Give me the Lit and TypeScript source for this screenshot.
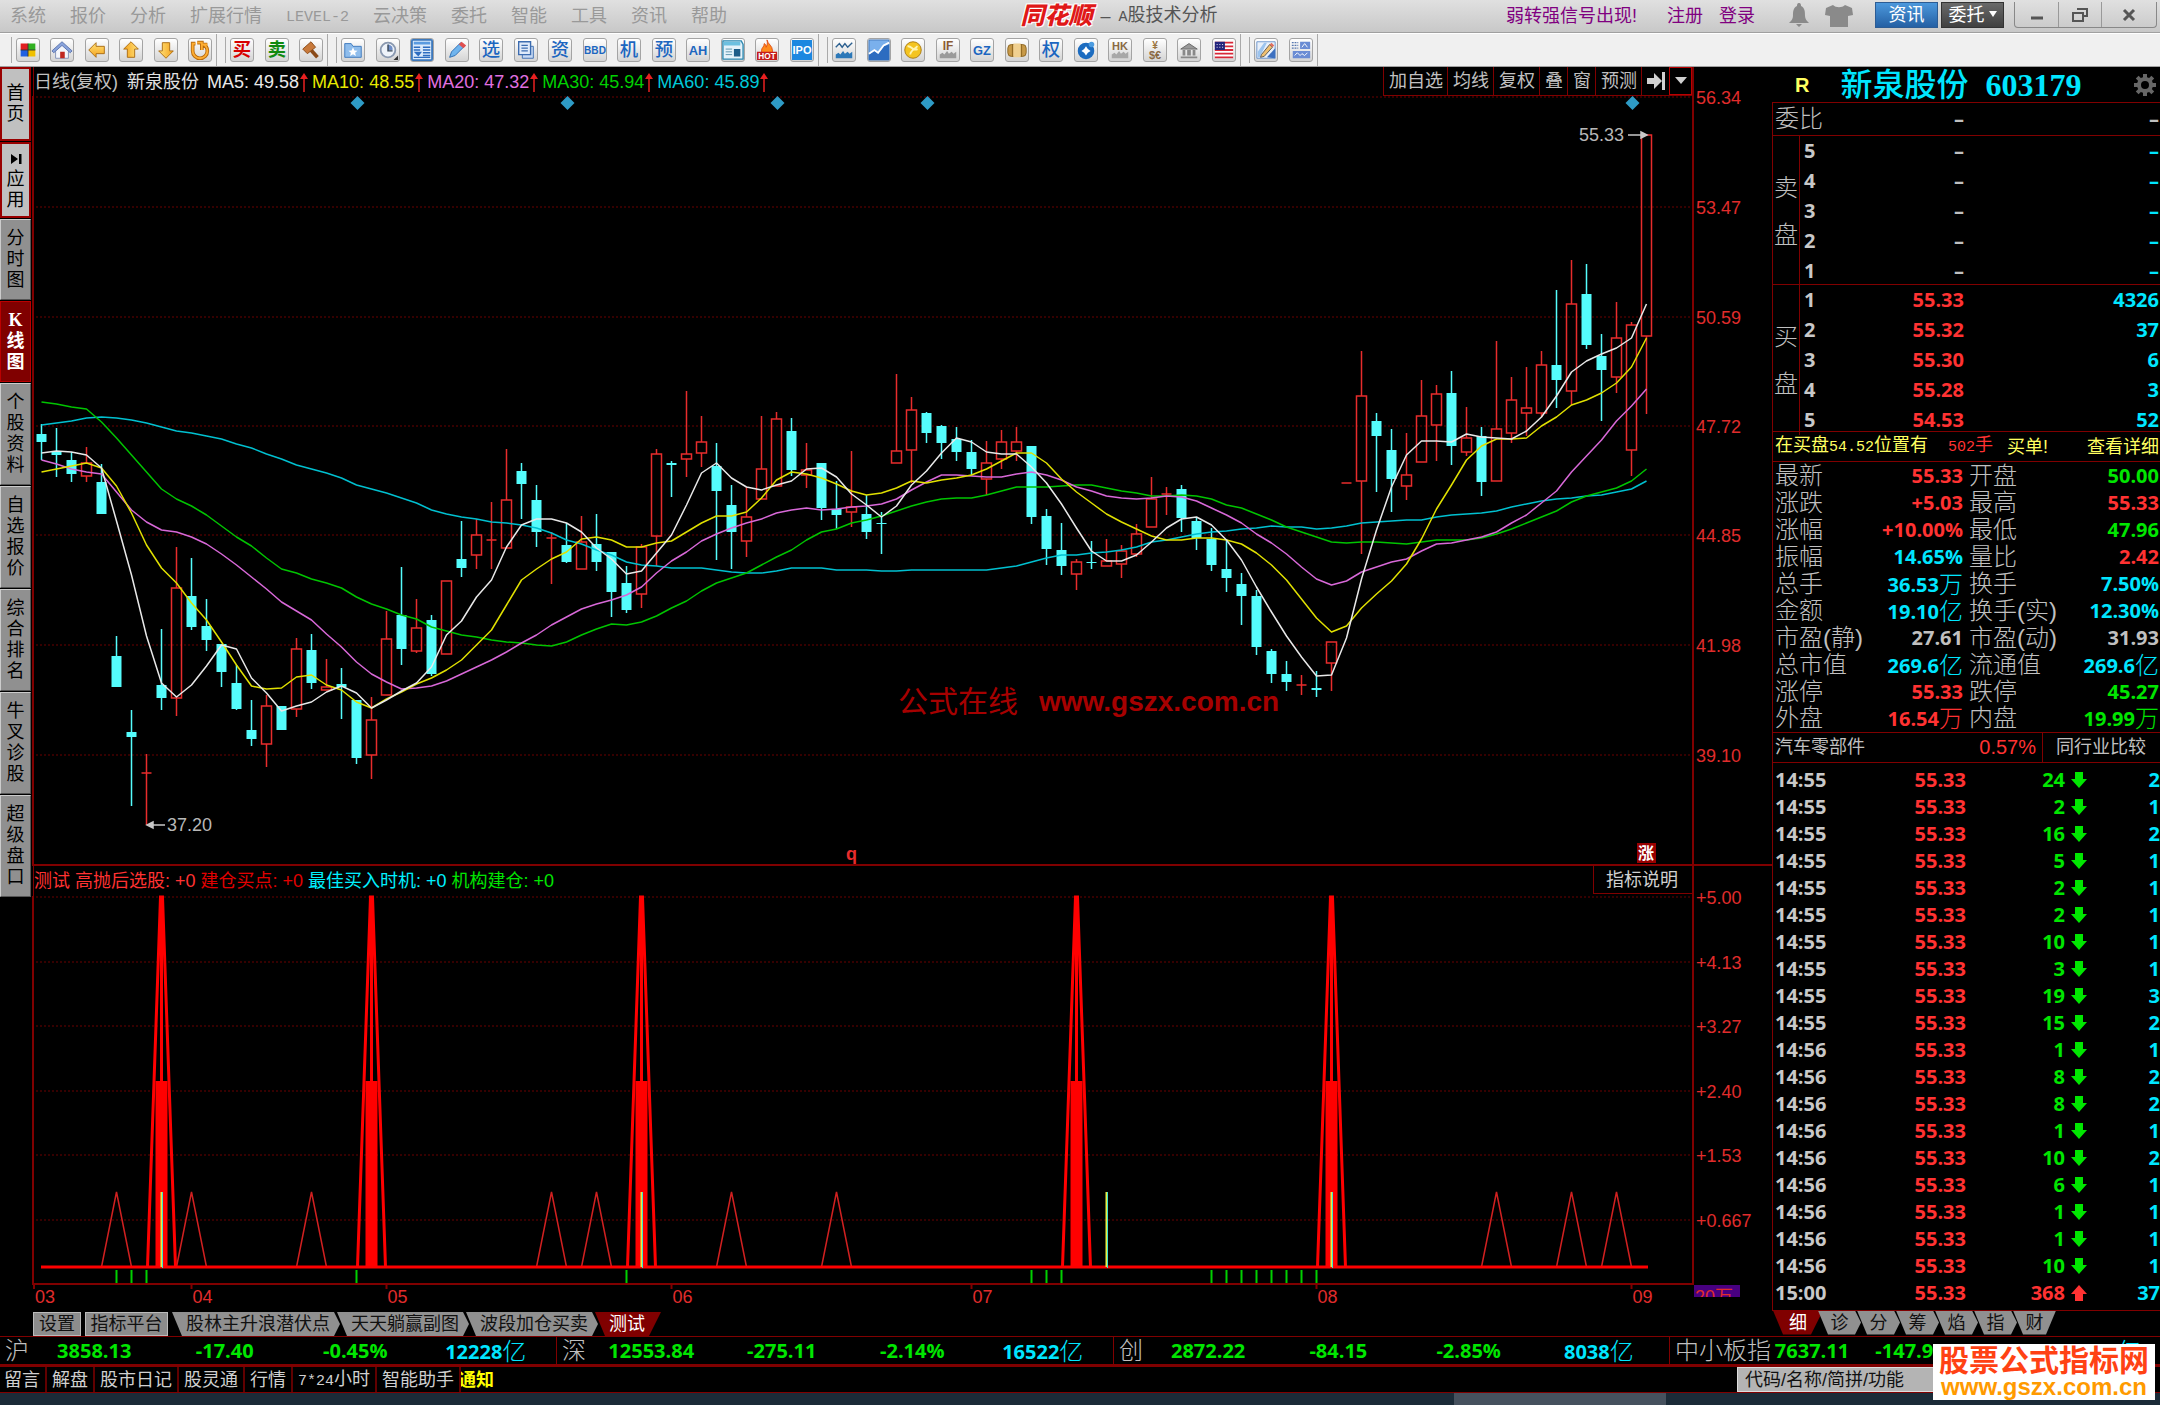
import { LitElement, html, css, svg, nothing } from "lit";
import { customElement } from "lit/decorators.js";
import { classMap } from "lit/directives/class-map.js";

/* ---------- chart data (chart units, one step per trading day) ---------- */

// direction, high, body top, body bottom, low
type Candle = [string, number, number, number, number];

const CANDLES: Candle[] = [
  ["d", 424, 434, 442, 460], ["d", 428, 452, 455, 477], ["d", 452, 460, 474, 482], ["u", 447, 463, 476, 482],
  ["d", 464, 482, 514, 514], ["d", 636, 656, 687, 687], ["d", 710, 732, 737, 806], ["u", 754, 773, 773, 825],
  ["d", 629, 685, 698, 710], ["u", 547, 588, 698, 716], ["d", 558, 596, 627, 630], ["d", 599, 626, 640, 651],
  ["d", 644, 644, 672, 687], ["d", 665, 683, 709, 710], ["d", 700, 730, 739, 746], ["u", 695, 706, 744, 767],
  ["d", 706, 706, 730, 730], ["u", 638, 649, 709, 717], ["d", 634, 650, 683, 689], ["u", 659, 687, 690, 690],
  ["d", 668, 684, 687, 719], ["d", 700, 700, 758, 764], ["u", 697, 720, 755, 779], ["u", 611, 639, 695, 695],
  ["d", 567, 615, 649, 665], ["u", 599, 628, 651, 653], ["d", 615, 620, 674, 676], ["u", 581, 581, 654, 654],
  ["d", 521, 559, 568, 577], ["u", 519, 535, 555, 569], ["u", 502, 540, 540, 569], ["u", 449, 500, 548, 548],
  ["d", 463, 471, 484, 519], ["d", 485, 500, 532, 547], ["u", 532, 538, 538, 584], ["d", 523, 545, 562, 563],
  ["u", 516, 542, 569, 569], ["d", 514, 544, 562, 571], ["d", 552, 552, 592, 617], ["d", 566, 583, 610, 613],
  ["u", 544, 547, 594, 608], ["u", 449, 454, 536, 566], ["d", 461, 463, 465, 497], ["u", 391, 454, 459, 477],
  ["u", 416, 442, 453, 467], ["d", 443, 466, 491, 560], ["d", 485, 505, 532, 569], ["u", 487, 517, 541, 557],
  ["u", 416, 469, 499, 499], ["u", 412, 419, 486, 486], ["d", 418, 431, 470, 476], ["u", 443, 470, 475, 488],
  ["d", 463, 463, 508, 520], ["d", 481, 509, 515, 529], ["u", 451, 507, 512, 527], ["d", 495, 514, 532, 539],
  ["d", 512, 523, 524, 554], ["u", 374, 451, 463, 463], ["u", 397, 410, 450, 483], ["d", 412, 413, 433, 443],
  ["d", 425, 426, 443, 459], ["d", 427, 439, 452, 461], ["d", 440, 452, 469, 475], ["u", 441, 463, 479, 495],
  ["u", 430, 442, 459, 469], ["u", 427, 442, 451, 461], ["d", 446, 446, 517, 524], ["d", 509, 516, 549, 565],
  ["d", 523, 550, 566, 575], ["u", 559, 562, 574, 590], ["d", 541, 562, 563, 569], ["u", 539, 561, 566, 566],
  ["u", 545, 551, 564, 578], ["u", 524, 534, 554, 557], ["u", 477, 499, 527, 527], ["u", 487, 494, 494, 515],
  ["d", 485, 489, 518, 532], ["d", 517, 521, 538, 550], ["d", 528, 539, 565, 571], ["d", 539, 569, 578, 592],
  ["d", 573, 584, 596, 625], ["d", 590, 596, 647, 655], ["d", 649, 651, 674, 683], ["d", 661, 674, 682, 691],
  ["u", 675, 685, 685, 695], ["d", 671, 688, 690, 697], ["u", 642, 642, 663, 691], ["u", 483, 483, 483, 483],
  ["u", 351, 396, 481, 554], ["d", 413, 421, 436, 492], ["d", 429, 450, 479, 512], ["u", 433, 475, 486, 500],
  ["u", 380, 416, 462, 462], ["u", 385, 394, 425, 461], ["d", 371, 393, 446, 465], ["u", 407, 438, 452, 456],
  ["d", 427, 436, 482, 496], ["u", 341, 429, 481, 481], ["u", 377, 400, 433, 443], ["u", 367, 408, 413, 436],
  ["u", 351, 365, 413, 417], ["d", 290, 365, 380, 408], ["u", 260, 304, 391, 405], ["d", 264, 294, 345, 349],
  ["d", 334, 356, 370, 421], ["u", 302, 338, 377, 393], ["u", 322, 325, 450, 476], ["u", 135, 135, 336, 414],
];

const AVERAGES: { tone: string; points: number[] }[] = [
  { tone: "c60", points: [425, 423, 421, 418, 417, 418, 420, 423, 427, 431, 433, 436, 439, 444, 448, 454, 459, 465, 469, 473, 478, 485, 489, 493, 498, 503, 510, 514, 517, 519, 522, 523, 525, 528, 533, 540, 544, 550, 555, 562, 565, 566, 568, 568, 568, 570, 572, 573, 573, 571, 568, 568, 568, 570, 570, 570, 571, 571, 570, 570, 570, 570, 570, 570, 568, 566, 562, 558, 555, 555, 553, 552, 550, 547, 542, 540, 537, 534, 532, 531, 529, 528, 526, 527, 527, 529, 528, 526, 523, 522, 521, 520, 520, 517, 515, 514, 513, 511, 507, 504, 501, 499, 498, 496, 495, 492, 489, 481] },
  { tone: "c30", points: [402, 404, 407, 409, 422, 438, 455, 472, 489, 499, 506, 515, 526, 537, 546, 558, 569, 573, 579, 583, 588, 597, 604, 609, 615, 619, 627, 631, 635, 637, 640, 642, 643, 645, 646, 642, 635, 629, 624, 625, 622, 616, 608, 601, 591, 583, 578, 573, 565, 557, 550, 540, 532, 529, 523, 520, 516, 511, 506, 502, 499, 498, 498, 495, 491, 487, 487, 487, 486, 485, 485, 488, 491, 493, 496, 496, 495, 496, 499, 505, 508, 514, 520, 527, 532, 537, 542, 543, 542, 542, 543, 544, 542, 540, 540, 540, 538, 534, 529, 523, 517, 511, 502, 496, 492, 488, 481, 469] },
  { tone: "c20", points: [460, 464, 469, 472, 474, 492, 510, 522, 530, 532, 537, 544, 554, 565, 577, 589, 602, 611, 620, 634, 647, 662, 674, 682, 689, 688, 686, 681, 674, 667, 660, 652, 643, 635, 625, 617, 609, 604, 600, 595, 587, 573, 561, 552, 541, 534, 528, 523, 519, 513, 510, 508, 510, 509, 507, 506, 504, 499, 490, 482, 475, 475, 476, 477, 477, 474, 472, 475, 480, 487, 491, 496, 498, 499, 498, 496, 497, 501, 508, 515, 523, 534, 543, 554, 567, 579, 585, 581, 572, 567, 562, 559, 551, 544, 543, 540, 537, 532, 523, 515, 503, 491, 472, 456, 440, 421, 406, 389] },
  { tone: "c10", points: [472, 469, 466, 463, 468, 486, 513, 545, 568, 583, 603, 620, 642, 665, 686, 689, 688, 677, 675, 685, 690, 702, 708, 699, 692, 684, 678, 670, 660, 645, 630, 605, 580, 569, 559, 552, 539, 537, 540, 547, 547, 543, 541, 532, 523, 516, 516, 512, 498, 480, 472, 474, 478, 484, 491, 495, 493, 488, 481, 483, 480, 478, 475, 469, 461, 453, 453, 463, 479, 492, 503, 514, 522, 529, 536, 540, 540, 538, 538, 540, 544, 553, 565, 580, 599, 618, 632, 626, 608, 594, 581, 564, 539, 509, 485, 460, 446, 439, 439, 438, 426, 417, 405, 400, 393, 383, 367, 338] },
  { tone: "c5", points: [453, 451, 452, 455, 468, 521, 575, 636, 683, 697, 685, 666, 645, 649, 678, 693, 711, 706, 702, 692, 686, 693, 708, 700, 691, 683, 667, 635, 621, 597, 580, 547, 525, 519, 519, 523, 532, 548, 559, 574, 571, 553, 535, 505, 473, 463, 478, 487, 490, 485, 481, 469, 468, 477, 494, 505, 517, 506, 485, 471, 453, 438, 442, 452, 454, 454, 467, 483, 504, 528, 551, 561, 561, 555, 542, 528, 519, 517, 525, 540, 560, 587, 612, 636, 657, 676, 675, 638, 579, 530, 487, 455, 441, 441, 442, 434, 437, 438, 439, 431, 417, 396, 372, 361, 354, 348, 338, 304] },
];

const dayX = (day: number) => 41.5 + day * 15;

const PRICE_AXIS = [["56.34", 97], ["53.47", 207], ["50.59", 317], ["47.72", 426], ["44.85", 535], ["41.98", 645], ["39.10", 755]] as const;
const SIGNAL_AXIS = [["+5.00", 897], ["+4.13", 962], ["+3.27", 1026], ["+2.40", 1091], ["+1.53", 1155], ["+0.667", 1220]] as const;
const MONTHS = [["03", -0.5], ["04", 10], ["05", 23], ["06", 42], ["07", 62], ["08", 85], ["09", 106]] as const;
const EVENT_DAYS = [21, 35, 49, 59, 106];
const STRONG_DAYS = [8, 22, 40, 69, 86];
const WEAK_DAYS = [5, 10, 18, 34, 37, 46, 53, 97, 102, 105];
const BUY_DAYS = [8, 40, 71, 86];
const BUILD_DAYS = [5, 6, 7, 21, 39, 66, 67, 68, 78, 79, 80, 81, 82, 83, 84, 85];

/* ---------- panel data ---------- */

const MENU = ["系统", "报价", "分析", "扩展行情", "LEVEL-2", "云决策", "委托", "智能", "工具", "资讯", "帮助"];
const SIDE = ["首页", "应用", "分时图", "K线图", "个股资料", "自选报价", "综合排名", "牛叉诊股", "超级盘口"];

const BIDS = [["1", "55.33", "4326"], ["2", "55.32", "37"], ["3", "55.30", "6"], ["4", "55.28", "3"], ["5", "54.53", "52"]];
const ASKS = ["5", "4", "3", "2", "1"];

// label, value, unit, tone, repeated for the two columns
const STATS = [
  ["最新", "55.33", "", "red", "开盘", "50.00", "", "green"],
  ["涨跌", "+5.03", "", "red", "最高", "55.33", "", "red"],
  ["涨幅", "+10.00%", "", "red", "最低", "47.96", "", "green"],
  ["振幅", "14.65%", "", "cyan", "量比", "2.42", "", "red"],
  ["总手", "36.53", "万", "cyan", "换手", "7.50%", "", "cyan"],
  ["金额", "19.10", "亿", "cyan", "换手(实)", "12.30%", "", "cyan"],
  ["市盈(静)", "27.61", "", "grey", "市盈(动)", "31.93", "", "grey"],
  ["总市值", "269.6", "亿", "cyan", "流通值", "269.6", "亿", "cyan"],
  ["涨停", "55.33", "", "red", "跌停", "45.27", "", "green"],
  ["外盘", "16.54", "万", "red", "内盘", "19.99", "万", "green"],
];

const TICKS: [string, string, string][] = [
  ["14:55", "24", "2"], ["14:55", "2", "1"], ["14:55", "16", "2"], ["14:55", "5", "1"], ["14:55", "2", "1"],
  ["14:55", "2", "1"], ["14:55", "10", "1"], ["14:55", "3", "1"], ["14:55", "19", "3"], ["14:55", "15", "2"],
  ["14:56", "1", "1"], ["14:56", "8", "2"], ["14:56", "8", "2"], ["14:56", "1", "1"], ["14:56", "10", "2"],
  ["14:56", "6", "1"], ["14:56", "1", "1"], ["14:56", "1", "1"], ["14:56", "10", "1"], ["15:00", "368", "37"],
];

const INDICES = [
  ["沪", "3858.13", "-17.40", "-0.45%", "12228"],
  ["深", "12553.84", "-275.11", "-2.14%", "16522"],
  ["创", "2872.22", "-84.15", "-2.85%", "8038"],
  ["中小板指", "7637.11", "-147.98", "-1.90%", "1984"],
];

/* ---------- toolbar icons, 24 by 24 ---------- */

const word = (text: string, size: number, fill: string, y = 18, weight = 700) =>
  svg`<text x="12" y=${y} text-anchor="middle" font-size=${size} font-weight=${weight} fill=${fill}>${text}</text>`;
const BLUE = "#1c66c0";
const han = (text: string) => word(text, 20, BLUE, 19, 500);
const bars = (fill: string) => svg`<path d="M3 21v-4l3-2 2 2 3-4 2 3 3-2 2 2 3-2v7z" fill=${fill}/>`;
const arrow = (turn: number) =>
  svg`<path transform="rotate(${turn} 12 12)" d="M3 12l8-8v4h9v8h-9v4z" fill="url(#gold)" stroke="#a86a10"/>`;

const GROUPS: { size: string; icons: [string, unknown][] }[] = [
  {
    size: "g6",
    icons: [
      ["板块", svg`<path d="M4 5h8v7H4z" fill="#e02020"/><path d="M12 5h8v7h-8z" fill="#30b020"/><path d="M4 12h8v7H4z" fill="#2060e0"/><path d="M12 12h8v7h-8z" fill="#f0c000"/><path d="M4 12h16M12 5v14" stroke="#333"/>`],
      ["主页", svg`<path d="M5 12v9h14v-9l-7-7z" fill="#f4f6fb" stroke="#8090b8"/><path d="M1 13L12 3l11 10-2 2L12 7l-9 8z" fill="#8aa4dc" stroke="#5b74ae"/><path d="M10 14h5v7h-5z" fill="#c02820"/>`],
      ["后退", arrow(0)],
      ["向上", arrow(90)],
      ["向下", arrow(270)],
      ["刷新", svg`<path d="M7 5H4v8a8 8 0 0 0 16 0c0-3-2-6-5-7M15 6h5M9 4h5v8" fill="none" stroke="#b86c10" stroke-width="4"/><path d="M7 5H4v8a8 8 0 0 0 16 0c0-3-2-6-5-7M15 6h5M9 4h5v8" fill="none" stroke="#ffae32" stroke-width="2"/>`],
    ],
  },
  {
    size: "g3",
    icons: [
      ["买入", word("买", 20, "#d80000", 19)],
      ["卖出", word("卖", 20, "#108a10", 19)],
      ["竞价", svg`<path d="M11 11l8 9" stroke="#8a4a18" stroke-width="4"/><path d="M3 11l9-8 5 6-9 7z" fill="#c87a3c" stroke="#8a4a18"/>`],
    ],
  },
  {
    size: "g14",
    icons: [
      ["自选", svg`<path d="M3 5h7l2 3h9v12H3z" fill="#8fbdec" stroke="#3c78bc"/><path d="M12 9l1.500 3.500 3.500.3-2.700 2.300.9 3.400-3.200-1.900-3.200 1.900.9-3.400L7 12.800l3.500-.3z" fill="#fff"/>`],
      ["历史", svg`<circle cx="12" cy="12" r="8" fill="#eef3fa" stroke="#8a99b0" stroke-width="2"/><path d="M12 6v6h5a5 5 0 0 0-5-6z" fill="#6f8fc8"/><path d="M12 6v7h5" fill="none" stroke="#345" stroke-width="1.500"/><path d="M23 18v5h-5z" fill="#333"/>`],
      ["新闻", svg`<path d="M1 1h22v22H1z" fill="#dcebfb" stroke="#3c78bc" stroke-width="2"/><path d="M3 3h18v3H3z" fill="#5a9be0"/><path d="M3 9h7M3 12h7M13 9h8M13 12h8M13 15h8M13 18h8M3 20h18" stroke="#2c6cc0" stroke-width="1.500"/><path d="M3 14h9l-4 5z" fill="#2c6cc0"/>`],
      ["画线", svg`<path d="M4 20l2-6L16 4l4 4L10 18z" fill="#6fb4ee" stroke="#2c6cb0"/><path d="M14 6l3-3 5 4-3 3z" fill="#e05050"/>`],
      ["选股", han("选")],
      ["多窗", svg`<path d="M8 8h12v13H8z" fill="#c8daf4" stroke="#3c6cb0"/><path d="M4 3h13v14H4z" fill="#dfeafa" stroke="#3c6cb0" stroke-width="1.500"/><path d="M7 7h7M7 10h7M7 13h7" stroke="#3c6cb0" stroke-width="1.500"/>`],
      ["资金", han("资")],
      ["BBD", word("BBD", 11, BLUE, 16)],
      ["机构", han("机")],
      ["预测", han("预")],
      ["AH股", word("AH", 14, BLUE, 17)],
      ["研报", svg`<path d="M1 2h20l2 4v16H1z" fill="#e4f2fa" stroke="#2c88b0" stroke-width="1.500"/><path d="M2 3h18v4H2z" fill="#6cc0e0"/><path d="M4 11h7M4 14h7M4 17h7" stroke="#5890a8"/><path d="M13 11h7v8h-7z" fill="#1c5c88"/>`],
      ["热点", svg`<path d="M12 1c1 5 6 6 6 12a6 6 0 0 1-12 0c0-4 3-4 3-8 2 1 2 3 2 4 1-2 2-4 1-8z" fill="#ff8a1c" stroke="#e04a10"/><path d="M1 14h22v9H1z" fill="#c41c1c"/>${word("HOT", 9, "#fff", 22)}`],
      ["新股", svg`<path d="M1 1h22v22H1z" fill="#1c88e0"/>${word("IPO", 12, "#fff", 16)}`],
    ],
  },
  {
    size: "g12",
    icons: [
      ["大盘", svg`<path d="M3 9l4-4 3 4 3-4 3 4 5-5" fill="none" stroke="#2c6090" stroke-width="1.500"/>${bars("#2c78b8")}`],
      ["走势", svg`<path d="M1 1h22v22H1z" fill="#7ab0ec" stroke="#3c70b0"/><path d="M1 17l6-4 4 3 6-8 6-2v17H1z" fill="#2c6cc0"/><path d="M1 16l6-4 4 3 6-8 6-3" fill="none" stroke="#fff" stroke-width="2"/>`],
      ["外汇", svg`<circle cx="12" cy="12" r="9" fill="#f4c420" stroke="#a87a10"/><path d="M6 8c5-1 5 6 11 3M9 17c0-4 4-6 8-9" stroke="#fff4b0" stroke-width="2" fill="none"/>`],
      ["期指", svg`${word("IF", 13, "#8a5a34", 12)}${bars("#9a9a9a")}`],
      ["国债", word("GZ", 14, BLUE, 17)],
      ["商品", svg`<rect x="2" y="6" width="20" height="13" rx="4" fill="#c89a48" stroke="#8a6420"/><path d="M8 5h8v15H8z" fill="#f0d090"/><path d="M7 6v13M17 6v13" stroke="#8a6420"/>`],
      ["权证", han("权")],
      ["基金", svg`<circle cx="12" cy="13" r="9" fill="#1c6cc0"/><circle cx="18" cy="6" r="3" fill="#4c9ce0"/><path d="M12 8l2 3 3 2-3 2-2 3-2-3-3-2 3-2z" fill="#fff"/>`],
      ["港股", svg`${word("HK", 12, "#8a6a44", 12)}${bars("#a8a8a8")}`],
      ["汇率", svg`${word("¥", 11, "#9a7440", 11)}${word("$€", 12, "#8a6a44", 22)}`],
      ["宏观", svg`<path d="M3 11l9-6 9 6z" fill="#999" stroke="#666"/><path d="M5 12h3v6H5zM10 12h4v6h-4zM16 12h3v6h-3zM3 19h18v2H3z" fill="#888"/>`],
      ["美股", svg`<path d="M2 3h20v18H2z" fill="#fff"/><path d="M2 4h20M2 8h20M2 12h20M2 16h20M2 20h20" stroke="#d82838" stroke-width="2"/><path d="M2 3h11v9H2z" fill="#24247c"/><path d="M4 6h8M4 9h8" stroke="#fff" stroke-dasharray="1 2"/>`],
    ],
  },
  {
    size: "g2",
    icons: [
      ["编辑", svg`<path d="M2 3h20v18H2z" fill="#e8f0fa" stroke="#6a94cc"/><path d="M3 14l7-10h3L5 20H3z" fill="#9cc4ee"/><path d="M13 20l9-10v11z" fill="#3c70c0"/><path d="M7 17L16 6l3 3L10 19l-4 1z" fill="#f0c070" stroke="#555"/><path d="M16 6l2-2 3 3-2 2z" fill="#e07060"/>`],
      ["布局", svg`<path d="M2 4h7M2 7h7M2 10h7" stroke="#5878b0" stroke-width="1.500" stroke-dasharray="2 1"/><path d="M11 3h11v8H11zM3 13h19v8H3z" fill="#6a8cd4"/><path d="M13 9l3-4 3 4M5 18l3-3 3 3 2-2 3 2 3-3" stroke="#fff" fill="none"/>`],
    ],
  },
];

@customElement("stock-chart")
class StockChart extends LitElement {
  static styles = css`
    :host { display: block; }
    .plot { display: block; width: 100%; height: auto; overflow: visible; }
    .clip { overflow: hidden; }
    text { font-family: "Liberation Sans", "Noto Sans CJK SC", sans-serif; font-size: 18px; }
    .axis { fill: #e02c2c; }
    .grid { stroke: #6a0000; stroke-width: 1; stroke-dasharray: 2 2; }
    .frame { stroke: #800000; stroke-width: 2; fill: none; }
    .up { stroke: #e82c2c; stroke-width: 1.500; fill: none; }
    .down { stroke: #54fcfc; stroke-width: 1.500; fill: #54fcfc; }
    .avg { fill: none; stroke-width: 1.500; stroke-linejoin: round; }
    .c5 { stroke: #e8e8e8; }
    .c10 { stroke: #e0e000; }
    .c20 { stroke: #d868d8; }
    .c30 { stroke: #00c400; }
    .c60 { stroke: #00c0d0; }
    .note { fill: #b8b8b8; }
    .arrow { stroke: #c8c8c8; fill: #c8c8c8; stroke-width: 1.500; }
    .event { fill: #2e9bc6; }
    .site { fill: #a60000; font-size: 30px; }
    .site-url { fill: #a60000; font-size: 28px; font-weight: 700; }
    .mark { fill: #e82c2c; font-weight: 700; }
    .badge { fill: #980000; }
    .badge-text { fill: #fff; font-size: 16px; font-weight: 700; }
    .strong { stroke: #f00; stroke-width: 3; fill: none; }
    .core { fill: #f00; }
    .stem { stroke: #f00; stroke-width: 3; }
    .weak { stroke: #d02020; stroke-width: 1.500; fill: none; }
    .buy { stroke: #e8f040; stroke-width: 2; }
    .buy-edge { stroke: #40e0d0; stroke-width: 1; }
    .build { stroke: #00d000; stroke-width: 2; }
    .volume { fill: #480080; }
  `;

  static properties = { kind: { type: String } };
  declare kind: string;

  private candle([dir, high, top, bottom, low]: Candle, day: number) {
    const x = dayX(day);
    if (dir === "d") {
      return svg`<path class="down" d="M${x} ${high}V${low}"/><rect x=${x - 5} y=${top} width="10" height=${Math.max(1, bottom - top)} fill="#54fcfc"/>`;
    }
    return svg`<path class="up" d="M${x} ${high}V${top}M${x} ${bottom}V${low}M${x - 5} ${top}h10V${bottom}h-10z"/>`;
  }

  private price() {
    return html`<svg class="plot" viewBox="33 96 1739 770" role="img" aria-label="日线">
      ${PRICE_AXIS.map(([label, y]) => svg`<path class="grid" d="M36 ${y}H1690"/><text class="axis" x="1696" y=${y + 7}>${label}</text>`)}
      <path class="frame" d="M33 96V866M1693 96V866M33 865H1772"/>
      ${EVENT_DAYS.map((day) => svg`<path class="event" d="M${dayX(day) + 1} 96l7 7-7 7-7-7z"/>`)}
      ${CANDLES.map((c, i) => this.candle(c, i))}
      ${AVERAGES.map((a) => svg`<polyline class="avg ${a.tone}" points=${a.points.map((y, i) => `${dayX(i)},${y}`).join(" ")}/>`)}
      <text class="note" x="1579" y="141">55.33</text>
      <path class="arrow" d="M1628 135H1642M1641 132l6 3-6 3z"/>
      <text class="note" x="167" y="831">37.20</text>
      <path class="arrow" d="M165 825H152M153 822l-6 3 6 3z"/>
      <text class="site" x="898" y="712">公式在线</text>
      <text class="site-url" x="1039" y="711">www.gszx.com.cn</text>
      <text class="mark" x="846" y="860">q</text>
      <rect class="badge" x="1637" y="843" width="19" height="20"/>
      <text class="badge-text" x="1638" y="859">涨</text>
    </svg>`;
  }

  private signal() {
    return html`<svg class="plot" viewBox="33 896 1739 416" role="img" aria-label="测试指标">
      ${SIGNAL_AXIS.map(([label, y]) => svg`<path class="grid" d="M36 ${y}H1690"/><text class="axis" x="1696" y=${y + 7}>${label}</text>`)}
      <path class="frame" d="M33 896V1284H1693V896"/>
      ${MONTHS.map(([label, day]) => svg`<path class="frame" d="M${dayX(day)} 1284v5"/><text class="axis" x=${dayX(day) + 1} y="1303">${label}</text>`)}
      ${WEAK_DAYS.map((day) => svg`<path class="weak" d="M${dayX(day) - 15} 1267l15-75 15 75"/>`)}
      ${STRONG_DAYS.map((day) => svg`<path class="strong" d="M${dayX(day) - 14} 1267L${dayX(day) - 1} 897h2l13 370"/><path class="stem" d="M${dayX(day)} 897V1267"/><rect class="core" x=${dayX(day) - 6} y="1081" width="12" height="186"/>`)}
      <path class="strong" d="M41 1267H1648"/>
      ${BUY_DAYS.map((day) => svg`<path class="buy" d="M${dayX(day)} 1192v75"/><path class="buy-edge" d="M${dayX(day) + 1} 1192v76"/>`)}
      ${BUILD_DAYS.map((day) => svg`<path class="build" d="M${dayX(day)} 1270v13"/>`)}
      <svg class="clip" x="1694" y="1285" width="46" height="12">
        <rect class="volume" width="46" height="12"/>
        <text class="axis" x="1" y="18">20万</text>
      </svg>
    </svg>`;
  }

  render() {
    return this.kind === "signal" ? this.signal() : this.price();
  }
}

@customElement("app-root")
class AppRoot extends LitElement {
  static styles = css`
    :host {
      display: flex; flex-direction: column; min-height: 100vh; background: #000; color: #c0c0c0;
      font-family: "Liberation Sans", "Noto Sans CJK SC", sans-serif; font-size: 18px; line-height: 24px;
      overflow: hidden;
    }
    * { box-sizing: border-box; }
    button, input { font: inherit; color: inherit; background: none; border: 0; padding: 0; margin: 0; border-radius: 0; }
    a { color: inherit; text-decoration: none; }
    table { border-collapse: collapse; width: 100%; }
    td, th { padding: 0; font-weight: 400; text-align: left; }
    .half { font-family: "Liberation Mono", monospace; font-size: 15px; }
    .red { color: #ff3232; }
    .green { color: #00e600; }
    .cyan { color: #00e6ff; }
    .grey { color: #c0c0c0; }
    .yellow { color: #ffff60; }

    /* title bar */
    .title { display: grid; grid-template-columns: 1fr auto 1fr; align-items: center; height: 33px; padding-left: 10px; background: linear-gradient(#e0e0e0, #c8c8c8); border-bottom: 1px solid #a0a0a0; white-space: nowrap; }
    .menu { display: flex; gap: 24px; color: #999; }
    .caption { display: flex; align-items: center; gap: 8px; padding-left: 68px; color: #555; }
    .logo { color: #e01818; font-weight: 900; font-style: italic; font-size: 24px; text-shadow: 1px 1px #fff, -1px -1px #fff, 1px -1px #fff, -1px 1px #fff; }
    .tools { display: flex; justify-content: flex-end; align-items: flex-start; height: 32px; padding-top: 2px; color: #800080; }
    .tools > a { margin-right: 16px; line-height: 28px; }
    .tools > a.promo { margin-right: 30px; }
    .tools svg { display: block; }
    .glyphs { display: flex; gap: 14px; margin: 0 21px 0 17px; }
    .pill { width: 63px; height: 26px; margin-right: 3px; color: #fff; background: linear-gradient(#4c98dc, #2460a4); border: 1px solid #2c5c94; }
    .pill.dark { margin-right: 10px; background: linear-gradient(#6a6a6a, #404040); border-color: #333; }
    .caret { display: inline-block; margin-left: 4px; border: 4px solid transparent; border-top: 6px solid #fff; border-bottom: 0; vertical-align: 4px; }
    .window { display: flex; margin-right: 3px; border: 1px solid #888; border-top: 0; border-radius: 0 0 4px 4px; }
    .window button { display: flex; align-items: center; justify-content: center; width: 43px; height: 25px; }
    .window button:last-child { width: 55px; }
    .window button + button { border-left: 1px solid #999; }

    /* icon bar */
    .icons { display: flex; height: 34px; padding-left: 7px; background: #f0f0f0; border-top: 1px solid #fff; border-bottom: 1px solid #a0a0a0; }
    .group { display: flex; align-items: center; padding: 0 4px 0 3px; margin-right: 4px; border-right: 1px solid #aaa; }
    .grip { width: 2px; height: 26px; margin-right: 4px; border-right: 1px solid #aaa; }
    .set { display: flex; justify-content: space-between; flex: none; }
    .g6 { width: 196px; }
    .g3 { width: 93px; }
    .g14 { width: 473px; }
    .g12 { width: 404px; }
    .g2 { width: 59px; }
    .icon { width: 24px; height: 24px; border: 1px solid #a4a4a4; border-radius: 3px; background: linear-gradient(#fff, #d4d4d4); overflow: hidden; }
    .icon svg { display: block; width: 22px; height: 22px; font-family: "Liberation Sans Narrow", "Liberation Sans", "Noto Sans CJK SC", sans-serif; }

    /* body */
    .body { display: grid; grid-template-columns: 33px minmax(0, 1fr) 388px; }
    .side { display: flex; flex-direction: column; gap: 1px; width: 31px; }
    .side button { padding: 8px 0; line-height: 21px; color: #000; background: #909090; border: 1px solid #ccc; border-right-color: #555; border-bottom-color: #555; }
    .side button.light { padding: 14px 0; background: #c0c0c0; border: 2px solid #900; }
    .side button.light.play { padding: 5px 0; }
    .side button.on { background: #800000; color: #fff; font-weight: 700; border-color: #b00; }
    .side .ch { display: block; }
    .side .latin { font-family: "Liberation Serif", serif; }
    .side svg { display: block; margin: 2px auto; }
    .bar { display: flex; align-items: center; height: 29px; margin-right: 78px; border-right: 2px solid #800000; border-left: 1px solid #800000; white-space: nowrap; }
    .bar.sub { height: 30px; gap: 5px; }
    .period { margin-right: 9px; }
    .stock { margin-right: 8px; color: #e0e0e0; }
    .ma { display: flex; align-items: center; margin-right: 3px; }
    .ma svg { display: block; }
    .w5 { color: #e8e8e8; }
    .w10 { color: #e8e800; }
    .w20 { color: #e070e0; }
    .w30 { color: #00d000; }
    .w60 { color: #00c8d8; }
    .signal-a { color: #ff3232; }
    .signal-b { color: #e00000; }
    .signal-c { color: #00f0ff; }
    .signal-d { color: #00e600; }
    .actions { display: flex; align-self: stretch; margin-left: auto; border-bottom: 1px solid #800000; }
    .actions button { display: flex; align-items: center; justify-content: center; padding: 0 4px 0 5px; border-left: 1px solid #800000; }
    .actions .mini { width: 28px; padding: 0; }
    .actions .drop { width: 23px; padding: 0; border: 1px solid #b00; }
    .describe { align-self: flex-start; height: 28px; width: 99px; margin-left: auto; padding-left: 12px; border: 1px solid #800000; border-width: 0 0 1px 1px; color: #d0d0d0; text-align: left; }
    .tabs { display: flex; height: 24px; color: #111; line-height: 22px; white-space: nowrap; }
    .tabs .square { width: 48px; margin-right: 4px; background: #8c8c8c; border: 1px solid #bbb; }
    .tabs .square.long { width: 83px; }
    .tab { padding: 0 10px 0 14px; margin-right: -3px; background: #909090; clip-path: polygon(0 0, calc(100% - 6px) 0, 100% 50%, calc(100% - 6px) 100%, 10px 100%); }
    .tab.on { padding-right: 16px; background: #800000; color: #fff; clip-path: polygon(0 0, 100% 0, calc(100% - 12px) 100%, 10px 100%); }

    /* quote panel */
    .panel { display: flex; flex-direction: column; min-width: 0; }
    .name { display: flex; align-items: center; height: 35px; padding: 0 3px 0 23px; font-size: 32px; white-space: nowrap; font-family: "Liberation Serif", "Noto Sans CJK SC", serif; font-weight: 700; }
    .name .flag { font-family: "Liberation Sans", sans-serif; font-size: 20px; margin-right: 31px; font-weight: 700; }
    .name .cn { font-weight: 500; margin-right: 17px; }
    .name button { margin-left: auto; }
    .name svg { display: block; }
    .quote { border: 1px solid #800000; border-right: 0; }
    .num { font-family: "Open Sans", "Noto Sans", sans-serif; font-size: 20px; font-weight: 700; line-height: 20px; text-align: right; }
    .label { font-size: 24px; font-weight: 300; }
    .unit { font-family: "Noto Sans CJK SC", sans-serif; font-size: 24px; font-weight: 300; line-height: 20px; vertical-align: -1px; }
    .ratio { display: grid; grid-template-columns: 94px 95px 1fr; align-items: center; height: 33px; padding: 0 1px 0 2px; border-bottom: 1px solid #800000; }
    .orders { display: grid; grid-template-columns: 27px 1fr; border-bottom: 1px solid #800000; }
    .orders.asks { height: 149px; }
    .orders.bids { height: 147px; }
    .orders > .label { display: flex; flex-direction: column; align-items: center; justify-content: center; gap: 23px; border-right: 1px solid #800000; }
    .orders table { table-layout: fixed; height: 150px; }
    .orders tr { height: 30px; }
    .orders .level { width: 26px; padding-left: 4px; color: #c8c8c8; text-align: left; }
    .orders .cost { width: 138px; }
    .orders .count { padding-right: 1px; }
    .alert { display: flex; align-items: center; height: 30px; padding: 0 1px 0 2px; border-bottom: 1px solid #800000; white-space: nowrap; line-height: 22px; }
    .alert .lots { margin: 0 14px 0 20px; }
    .alert a { margin-left: auto; }
    .stats { border-bottom: 1px solid #800000; table-layout: fixed; }
    .stats tr { height: 27px; }
    .stats th, .stats td { line-height: 20px; height: 27px; white-space: nowrap; }
    .stats th { width: 96px; padding-left: 2px; }
    .stats td { width: 94px; }
    .stats th.second { padding-left: 6px; }
    .stats td.last { width: auto; padding-right: 1px; }
    .sector { display: flex; align-items: center; height: 30px; padding-left: 2px; border-bottom: 1px solid #800000; }
    .sector .change { margin-left: auto; padding-right: 6px; font-size: 20px; }
    .sector a { width: 118px; padding-left: 13px; border-left: 1px solid #800000; line-height: 29px; }
    .ticks { margin: 4px 0 3px; }
    .ticks tr { height: 27px; }
    .ticks .time { width: 92px; padding-left: 2px; color: #c8c8c8; text-align: left; }
    .ticks .cost { width: 101px; }
    .ticks .lots { width: 99px; }
    .ticks .dir { width: 24px; padding-left: 5px; }
    .ticks .dir svg { display: block; }
    .ptabs { display: flex; padding-left: 1px; height: 24px; line-height: 22px; }
    .ptabs .tab { width: 43px; margin-right: -4px; padding: 0; color: #111; }
    .ptabs .tab:first-child { width: 50px; margin-right: -5px; padding: 0; color: #fff; }
    .ptabs .tab:last-child { clip-path: polygon(0 0, 100% 0, calc(100% - 10px) 100%, 10px 100%); }

    /* index strip and status bar */
    .footer { position: relative; }
    .indices { display: grid; grid-template-columns: 556fr 557fr 556fr 491fr; height: 31px; border-top: 1px solid #800000; border-bottom: 3px solid #800000; }
    .index { display: grid; grid-template-columns: 24px repeat(4, 1fr); align-items: center; padding: 0 5px; white-space: nowrap; }
    .index + .index { border-left: 1px solid #800000; }
    .index:last-child { grid-template-columns: 88px repeat(4, 1fr); }
    .index .num { text-align: center; }
    .status { display: flex; height: 26px; border-bottom: 1px solid #800000; white-space: nowrap; }
    .status > button { padding: 0 5px; border-right: 2px solid #600000; color: #d0d0d0; }
    .status > button:first-child { padding-left: 4px; }
    .news { width: 33px; overflow: hidden; display: flex; justify-content: flex-end; align-items: center; color: #ffff00; font-weight: 700; }
    .finder { width: 415px; margin: 0 8px 0 auto; padding: 0 7px; background: #b4b4b4; border: 1px solid #ddd; color: #111; }
    .finder::placeholder { color: #111; opacity: 1; }
    .desk { display: flex; flex: 1; min-height: 12px; background: #1b2b38; }
    .desk i:nth-child(1) { flex: 1454; }
    .desk i:nth-child(2) { flex: 212; background: #46515e; }
    .desk i:nth-child(3) { flex: 494; }
    .stamp { position: absolute; right: 5px; top: 8px; width: 222px; height: 56px; padding-top: 2px; background: #fff; text-align: center; font-weight: 700; font-size: 30px; line-height: 30px; color: #ff4214; white-space: nowrap; }
    .stamp a { display: block; font-size: 24px; line-height: 22px; color: #ff9a00; }
  `;

  private mixed(text: string) {
    return text.split(/([\x21-\x7e]+)/).filter(Boolean).map((part) =>
      /[\x21-\x7e]/.test(part) ? html`<span class="half">${part}</span>` : part);
  }

  private rise() {
    return html`<svg width="10" height="22" viewBox="0 0 10 22" aria-hidden="true"><path d="M5 21V4" stroke="#e82020" stroke-width="1.500"/><path d="M1 8l4-6 4 6z" fill="#e82020"/></svg>`;
  }

  private titleBar() {
    return html`<header class="title">
      <nav class="menu">${MENU.map((m) => html`<button>${this.mixed(m)}</button>`)}</nav>
      <div class="caption"><span class="logo">同花顺</span><span>–</span><span>${this.mixed("A股技术分析")}</span></div>
      <div class="tools">
        <a class="promo" href="#signal">弱转强信号出现!</a><a href="#join">注册</a><a class="login" href="#login">登录</a>
        <div class="glyphs">
          <svg width="22" height="26" viewBox="0 0 22 26" aria-hidden="true"><path d="M11 1c2 0 2 2 2 3 4 2 4 6 4 10 0 3 2 5 4 7H1c2-2 4-4 4-7 0-4 0-8 4-10 0-1 0-3 2-3zM8 22h6l-3 3z" fill="#8a8a8a"/></svg>
          <svg width="30" height="26" viewBox="0 0 30 26" aria-hidden="true"><path d="M9 3c3 3 9 3 12 0l7 3 1 7-5 1v11H6V14l-5-1 1-7z" fill="#8a8a8a"/></svg>
        </div>
        <button class="pill">资讯</button>
        <button class="pill dark">委托<span class="caret"></span></button>
        <div class="window">
          <button aria-label="最小化"><svg width="16" height="16" viewBox="0 0 16 16"><path d="M2 11h12" stroke="#555" stroke-width="3"/></svg></button>
          <button aria-label="还原"><svg width="18" height="16" viewBox="0 0 18 16"><path d="M6 2h10v7h-4M2 6h10v8H2z" fill="none" stroke="#555" stroke-width="2"/></svg></button>
          <button aria-label="关闭"><svg width="16" height="16" viewBox="0 0 16 16"><path d="M3 3l10 10M13 3L3 13" stroke="#555" stroke-width="3"/></svg></button>
        </div>
      </div>
    </header>`;
  }

  private iconBar() {
    return html`<div class="icons">
      ${GROUPS.map((g) => html`<div class="group"><span class="grip"></span><div class="set ${g.size}">
        ${g.icons.map(([label, art]) => html`<button class="icon" aria-label=${label}><svg viewBox="0 0 24 24"><defs><linearGradient id="gold" x1="0" y1="0" x2="0" y2="1"><stop offset="0" stop-color="#ffe27a"/><stop offset="1" stop-color="#f5a31c"/></linearGradient></defs>${art}</svg></button>`)}
      </div></div>`)}
    </div>`;
  }

  private sideTabs() {
    return html`<nav class="side">${SIDE.map((label, i) => html`<button class=${classMap({ light: i < 2, play: i === 1, on: i === 3 })}>
      ${i === 1 ? html`<svg width="14" height="16" viewBox="0 0 14 16" aria-hidden="true"><path d="M2 3l7 5-7 5zM10 3h2.500v10H10z" fill="#000"/></svg>` : nothing}
      ${[...label].map((ch) => html`<span class=${classMap({ ch: true, latin: ch === "K" })}>${ch}</span>`)}
    </button>`)}</nav>`;
  }

  private chartArea() {
    const averages = [["5", "49.58"], ["10", "48.55"], ["20", "47.32"], ["30", "45.94"], ["60", "45.89"]];
    return html`<main>
      <div class="bar">
        <span class="period">日线(复权)</span><span class="stock">新泉股份</span>
        ${averages.map(([n, v]) => html`<span class="ma w${n}">MA${n}: ${v}${this.rise()}</span>`)}
        <div class="actions">
          <button>加自选</button><button>均线</button><button>复权</button><button>叠</button><button>窗</button><button>预测</button>
          <button class="mini" aria-label="跳到最新"><svg width="20" height="20" viewBox="0 0 20 20"><path d="M1 7h7V2l8 8-8 8v-5H1zM16 1h3v18h-3z" fill="#d0d0d0"/></svg></button>
          <button class="drop" aria-label="更多"><svg width="12" height="8" viewBox="0 0 12 8"><path d="M0 0h12L6 7z" fill="#d0d0d0"/></svg></button>
        </div>
      </div>
      <stock-chart kind="price"></stock-chart>
      <div class="bar sub">
        <span class="signal-a">测试</span><span class="signal-a">高抛后选股: +0</span><span class="signal-b">建仓买点: +0</span>
        <span class="signal-c">最佳买入时机: +0</span><span class="signal-d">机构建仓: +0</span>
        <button class="describe">指标说明</button>
      </div>
      <stock-chart kind="signal"></stock-chart>
      <nav class="tabs">
        <button class="square">设置</button><button class="square long">指标平台</button>
        <button class="tab">股林主升浪潜伏点</button><button class="tab">天天躺赢副图</button><button class="tab">波段加仓买卖</button><button class="tab on">测试</button>
      </nav>
    </main>`;
  }

  private statCells(label: string, value: string, unit: string, tone: string, second: boolean) {
    return html`<th class="label ${second ? "second" : ""}" scope="row">${label}</th>
      <td class="num ${tone} ${second ? "last" : ""}">${value}${unit ? html`<span class="unit">${unit}</span>` : nothing}</td>`;
  }

  private panel() {
    return html`<aside class="panel">
      <div class="name">
        <span class="flag yellow">R</span><span class="cn cyan">新泉股份</span><span class="cyan">603179</span>
        <button aria-label="设置"><svg width="24" height="24" viewBox="0 0 24 24"><path d="M12 1v22M1 12h22M4.200 4.200l15.600 15.600M19.800 4.200L4.200 19.800" stroke="#666" stroke-width="4"/><circle cx="12" cy="12" r="6" fill="#000" stroke="#666" stroke-width="4"/></svg></button>
      </div>
      <div class="quote">
        <div class="ratio"><span class="label">委比</span><span class="num">–</span><span class="num">–</span></div>
        <section class="orders asks"><div class="label"><span>卖</span><span>盘</span></div>
          <table><tbody>${ASKS.map((n) => html`<tr><td class="num level">${n}</td><td class="num cost">–</td><td class="num count cyan">–</td></tr>`)}</tbody></table>
        </section>
        <section class="orders bids"><div class="label"><span>买</span><span>盘</span></div>
          <table><tbody>${BIDS.map(([n, p, v]) => html`<tr><td class="num level">${n}</td><td class="num cost red">${p}</td><td class="num count cyan">${v}</td></tr>`)}</tbody></table>
        </section>
        <div class="alert yellow"><span>${this.mixed("在买盘54.52位置有")}</span><span class="lots red">${this.mixed("502手")}</span><span>买单!</span><a href="#detail">查看详细</a></div>
        <table class="stats"><tbody>${STATS.map((s) => html`<tr>${this.statCells(s[0], s[1], s[2], s[3], false)}${this.statCells(s[4], s[5], s[6], s[7], true)}</tr>`)}</tbody></table>
        <div class="sector"><span>汽车零部件</span><span class="change red">0.57%</span><a href="#peers">同行业比较</a></div>
        <table class="ticks"><tbody>${TICKS.map(([t, lots, n]) => {
          const up = t === "15:00";
          return html`<tr><td class="num time">${t}</td><td class="num cost red">55.33</td><td class="num lots ${up ? "red" : "green"}">${lots}</td>
            <td class="dir"><svg width="18" height="18" viewBox="0 0 18 18" aria-hidden="true">${up
              ? svg`<path d="M9 1l8 9h-4v7H5v-7H1z" fill="#ff3232"/>`
              : svg`<path d="M9 17l8-9h-4V1H5v7H1z" fill="#00e600"/>`}</svg></td>
            <td class="num cyan">${n}</td></tr>`;
        })}</tbody></table>
      </div>
      <nav class="ptabs">${[..."细诊分筹焰指财"].map((ch, i) => html`<button class=${classMap({ tab: true, on: i === 0 })}>${ch}</button>`)}</nav>
    </aside>`;
  }

  private footer() {
    return html`<footer class="footer">
      <div class="indices">${INDICES.map(([name, last, diff, pct, turn]) => html`<div class="index">
        <span class="label">${name}</span><span class="num green">${last}</span><span class="num green">${diff}</span><span class="num green">${pct}</span>
        <span class="num cyan">${turn}<span class="unit">亿</span></span></div>`)}</div>
      <div class="status">
        ${["留言", "解盘", "股市日记", "股灵通", "行情", "7*24小时", "智能助手"].map((s) => html`<button>${this.mixed(s)}</button>`)}
        <span class="news">通知</span>
        <input class="finder" type="text" aria-label="代码/名称/简拼/功能" placeholder="代码/名称/简拼/功能" />
      </div>
      <div class="stamp">股票公式指标网<a href="#site">www.gszx.com.cn</a></div>
    </footer>`;
  }

  render() {
    return html`${this.titleBar()}${this.iconBar()}
      <div class="body">${this.sideTabs()}${this.chartArea()}${this.panel()}</div>
      ${this.footer()}
      <div class="desk"><i></i><i></i><i></i></div>`;
  }
}
